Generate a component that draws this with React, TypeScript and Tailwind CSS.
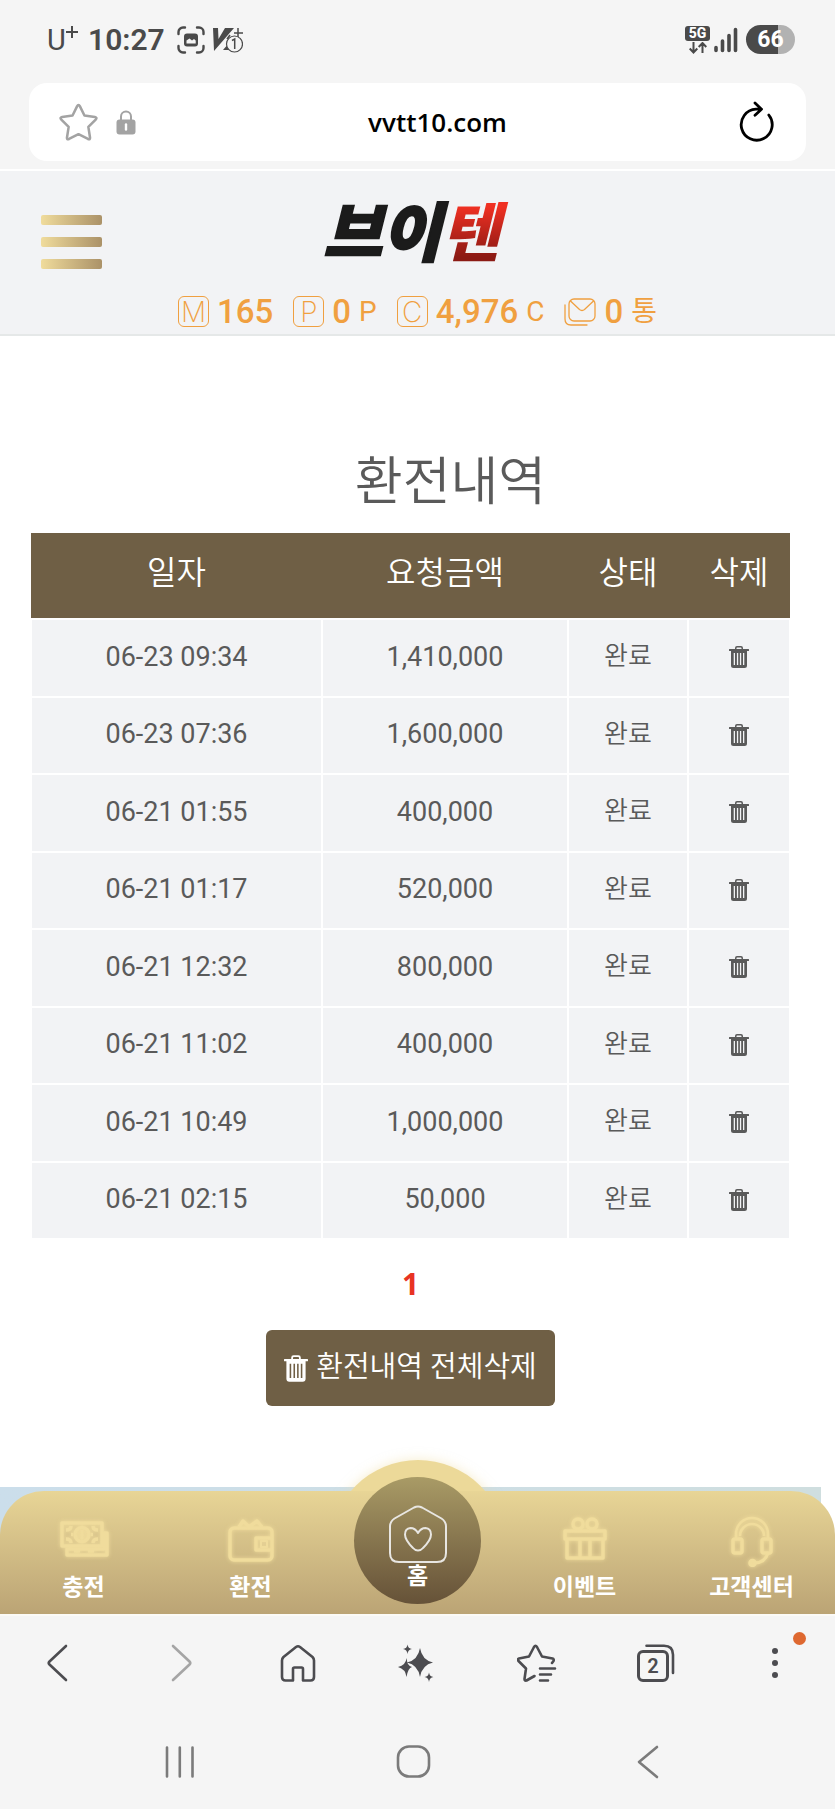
import type { ReactNode } from "react";

const HISTORY = [
  { date: "06-23 09:34", amount: "1,410,000", status: "완료" },
  { date: "06-23 07:36", amount: "1,600,000", status: "완료" },
  { date: "06-21 01:55", amount: "400,000", status: "완료" },
  { date: "06-21 01:17", amount: "520,000", status: "완료" },
  { date: "06-21 12:32", amount: "800,000", status: "완료" },
  { date: "06-21 11:02", amount: "400,000", status: "완료" },
  { date: "06-21 10:49", amount: "1,000,000", status: "완료" },
  { date: "06-21 02:15", amount: "50,000", status: "완료" },
];

function TrashIcon({ className }: { className: string }) {
  return (
    <svg viewBox="0 0 20 22" className={className} fill="currentColor" aria-hidden="true">
      <path
        fillRule="evenodd"
        d="M6 3V2a2 2 0 0 1 2-2h4a2 2 0 0 1 2 2v1h5.500a.5.5 0 0 1 .5.5v1a.5.5 0 0 1-.5.5H18v14.500a2.500 2.500 0 0 1-2.500 2.500h-11A2.500 2.500 0 0 1 2 19.500V5H.5a.5.5 0 0 1-.5-.5v-1A.5.5 0 0 1 .5 3ZM7.500 3h5v-.8a.7.7 0 0 0-.7-.7H8.200a.7.7 0 0 0-.7.7ZM4.700 7v12h1.300V7ZM7.900 7v12h1.300V7ZM10.900 7v12h1.300V7ZM14 7v12h1.300V7Z"
      />
    </svg>
  );
}

function StatusBar() {
  return (
    <div className="flex h-[83px] items-center justify-between pb-1 pl-[47px] pr-10 text-[#4a4a4a]">
      <div className="flex items-center">
        <span className="flex w-[41px] items-center text-[29px] leading-8">
          U
          <svg viewBox="0 0 12 12" className="mb-4 h-3 w-3" stroke="currentColor" strokeWidth="2" aria-hidden="true">
            <path d="M6 0v12M0 6h12" />
          </svg>
        </span>
        <span className="text-[30px] font-semibold leading-8">10:27</span>
        <svg viewBox="0 0 28 28" className="ml-3 h-7 w-7" fill="none" stroke="currentColor" strokeWidth="2.400" strokeLinecap="round" aria-hidden="true">
          <path d="M1.500 8V6A4.500 4.500 0 0 1 6 1.500h2M20 1.500h2A4.500 4.500 0 0 1 26.500 6v2M26.500 20v2a4.500 4.500 0 0 1-4.500 4.500h-2M8 26.500H6A4.500 4.500 0 0 1 1.500 22v-2" />
          <rect x="7" y="7.500" width="14" height="13" rx="3" fill="currentColor" stroke="none" />
          <path d="M9.500 17.500v-3l3-2 2.500 2 2-1.500 1.700 1.500v3z" fill="#f5f5f5" stroke="none" />
        </svg>
        <svg viewBox="0 0 32 28" className="ml-[6px] h-7 w-8" aria-hidden="true">
          <path d="M2 2h5l.5 11L14 2h9L3 25ZM12 24l6-7v7Z" fill="currentColor" />
          <path d="M27 2v9M23 7h9M16 13l3-4" stroke="currentColor" strokeWidth="1.500" />
          <circle cx="23.500" cy="18" r="8" fill="#f5f5f5" stroke="currentColor" strokeWidth="1.200" />
          <path d="M21 14.500l2.700-1.500v10" fill="none" stroke="currentColor" strokeWidth="1.500" />
        </svg>
      </div>
      <div className="flex items-center">
        <div className="flex w-[25px] flex-col items-center">
          <span className="flex h-[15px] w-full items-center justify-center rounded-[3px] bg-[#4a4a4a] text-[14px] font-extrabold leading-none text-white">
            5G
          </span>
          <svg viewBox="0 0 18 12" className="mt-px h-3 w-[18px]" fill="none" stroke="currentColor" strokeWidth="2" aria-hidden="true">
            <path d="M4.500 0v10M.7 6.500l3.800 4 3.800-4M13.500 11V1M9.700 5l3.800-4 3.800 4" />
          </svg>
        </div>
        <svg viewBox="0 0 24 26" className="ml-1 h-[26px] w-6" stroke="currentColor" strokeWidth="3.600" strokeLinecap="round" aria-hidden="true">
          <path d="M2 20.500v3M8.500 14v9.500M15 8.500v15M21.500 2.500v21" />
        </svg>
        <span className="ml-2 flex h-[29px] w-[49px] items-center justify-center rounded-full bg-[linear-gradient(90deg,#4a4a4a_65%,#b2b2b2_65%)] text-[23px] font-bold leading-none text-white">
          66
        </span>
      </div>
    </div>
  );
}

function AddressBar() {
  return (
    <div className="mx-[29px] mb-2 flex h-[78px] items-center rounded-[18px] bg-white px-[30px]">
      <div className="flex flex-1 items-center gap-[18px]">
        <button type="button" aria-label="북마크">
          <svg viewBox="0 0 40 40" className="h-[39px] w-[39px]" fill="none" stroke="#a3a3a3" strokeWidth="2.600" strokeLinejoin="round">
            <path d="M18.500 3.500q1.500-3 3 0l4.600 9.300 10.700 1.600q2.700.5.800 2.600l-7.500 7.500 1.700 10.900q.3 2.600-2.100 1.500L20 32l-9.700 4.900q-2.400 1.100-2.100-1.500l1.700-10.900-7.500-7.500q-1.900-2.100.8-2.600l10.700-1.600z" />
          </svg>
        </button>
        <svg viewBox="0 0 20 26" className="h-[26px] w-5" aria-hidden="true">
          <path d="M5 12V7.500a5 5 0 0 1 10 0V12" fill="none" stroke="#a3a3a3" strokeWidth="2" />
          <rect x=".5" y="10.500" width="19" height="15" rx="3" fill="#a3a3a3" />
          <path d="M10 15.500v5" stroke="#fff" strokeWidth="2.400" strokeLinecap="round" />
        </svg>
      </div>
      <span className="pl-10 font-['Open_Sans',sans-serif] text-[26px] font-semibold text-black">vvtt10.com</span>
      <div className="flex flex-1 justify-end">
        <button type="button" aria-label="새로고침">
          <svg viewBox="0 0 40 42" className="h-[42px] w-10" fill="none" stroke="#000" strokeWidth="2.800" strokeLinecap="round" strokeLinejoin="round">
            <path d="M32.800 14A15.500 15.500 0 1 1 20 8.200h5.500M19 2l6.500 6.200-6.500 6" />
          </svg>
        </button>
      </div>
    </div>
  );
}

function LetterBox({ children }: { children: string }) {
  return (
    <span className="flex h-[31px] w-[31px] items-center justify-center rounded-[6px] border border-[#f0a040] font-[Inter] text-[28px] font-extralight leading-none">
      {children}
    </span>
  );
}

function Balance({ icon, value, unit }: { icon: ReactNode; value: string; unit?: string }) {
  return (
    <li className="flex items-center gap-2">
      {icon}
      <span className="text-[33px] font-medium leading-8">{value}</span>
      {unit && <span className="text-[28px] leading-8">{unit}</span>}
    </li>
  );
}

function SiteHeader() {
  return (
    <header className="border-b-2 border-t-2 border-b-[#e5e8e8] border-t-white bg-[#f2f3f5] pb-[7px]">
      <div className="grid h-[125px] grid-cols-[1fr_auto_1fr] items-center px-[41px]">
        <button type="button" aria-label="메뉴" className="mt-4 flex w-[61px] flex-col gap-3">
          <span className="h-[10px] w-full rounded-[2px] bg-linear-to-r from-[#f0dc9c] to-[#ab9268]" />
          <span className="h-[10px] w-full rounded-[2px] bg-linear-to-r from-[#f0dc9c] to-[#ab9268]" />
          <span className="h-[10px] w-full rounded-[2px] bg-linear-to-r from-[#f0dc9c] to-[#ab9268]" />
        </button>
        <a href="#" className="mb-3 flex pr-3 font-['Noto_Sans_CJK_KR',sans-serif] text-[64px] font-black italic leading-[72px]">
          <span className="text-[#1b1b1b] [-webkit-text-stroke:2px]">브이</span>
          <span className="-mr-3 bg-linear-to-b from-[#f03022] from-20% to-[#8c1a14] to-90% bg-clip-text pr-3 text-transparent">텐</span>
        </a>
      </div>
      <ul className="flex h-[31px] items-center justify-center gap-5 text-[#f0a040]">
        <Balance icon={<LetterBox>M</LetterBox>} value="165" />
        <Balance icon={<LetterBox>P</LetterBox>} value="0" unit="P" />
        <Balance icon={<LetterBox>C</LetterBox>} value="4,976" unit="C" />
        <Balance
          icon={
            <svg viewBox="0 0 32 28" className="h-7 w-8" fill="none" stroke="currentColor" strokeWidth="1.300" strokeLinecap="round" aria-hidden="true">
              <rect x="5" y="1" width="26" height="22" rx="5" />
              <path d="M6.500 3l9 8.500q2.500 2 5 0l9-8.500M1 7v14q0 6 6 6h16" />
            </svg>
          }
          value="0"
          unit="통"
        />
      </ul>
    </header>
  );
}

function HistoryTable() {
  return (
    <table className="h-[707px] w-full table-fixed border-collapse text-center text-[#5a5a5a]">
      <thead>
        <tr className="h-[86px] bg-[#6f5f45] text-[32px] text-white">
          <th className="w-[291px] pb-[6px] font-[350]">일자</th>
          <th className="pb-[6px] font-[350]">요청금액</th>
          <th className="w-[120px] pb-[6px] font-[350]">상태</th>
          <th className="w-[102px] pb-[6px] font-[350]">삭제</th>
        </tr>
      </thead>
      <tbody className="text-[27px]">
        {HISTORY.map((row) => (
          <tr key={row.date} className="bg-[#f2f3f5]">
            <td className="border-2 border-white pb-[2px]">{row.date}</td>
            <td className="border-2 border-white pb-[2px]">{row.amount}</td>
            <td className="border-2 border-white pb-[2px] text-[26px] font-[350]">{row.status}</td>
            <td className="border-2 border-white pb-1">
              <button type="button" aria-label="삭제" className="align-middle">
                <TrashIcon className="h-[22px] w-5" />
              </button>
            </td>
          </tr>
        ))}
      </tbody>
    </table>
  );
}

function NavItem({ label, children }: { label: string; children: ReactNode }) {
  return (
    <a href="#" className="flex flex-col items-center pt-[22px]">
      <svg
        viewBox="0 0 52 54"
        className="h-[54px] w-[52px] drop-shadow-[0_0_2px_#f0dc9c]"
        fill="none"
        stroke="#f0dc9c"
        strokeWidth="3.500"
        strokeLinejoin="round"
        aria-hidden="true"
      >
        {children}
      </svg>
      <span className="mt-[7px]">{label}</span>
    </a>
  );
}

function BottomNav() {
  return (
    <div className="relative pt-1">
      {/* page footer peeking out behind the rounded corners */}
      <div className="absolute bottom-0 left-0 right-[14px] top-0 bg-linear-to-r from-[#cbdeeb] to-[#cfdedf]" />
      <div className="absolute -top-[47px] bottom-0 left-0 right-0 flex justify-center overflow-hidden pt-5">
        <div className="h-[176px] w-[176px] shrink-0 rounded-full bg-[#ecd999] shadow-[0_0_12px_#f0dc9c80]" />
      </div>
      <nav className="relative grid h-[123px] grid-cols-5 rounded-t-[44px] bg-linear-to-b from-[#e8d596] to-[#bba475] text-[23px] font-bold leading-7 text-white">
        <NavItem label="충전">
          <path d="M4 10h40v23H4z" />
          <path d="M46 20h3v22H9v-6h37z" />
          <circle cx="24" cy="21.500" r="7" fill="#f0dc9c" fillOpacity=".5" />
          <path d="M8 17q5 0 5-4M8 26q5 0 5 4M40 17q-5 0-5-4M40 26q-5 0-5 4M24 17v9M13 21.500h2M33 21.500h2M16 38h6M30 38h6" />
        </NavItem>
        <NavItem label="환전">
          <rect x="5" y="15" width="42" height="32" rx="4" />
          <path d="M14 14l4-6 6 6 8-6 5 6M47 25H31v12h16" />
          <path d="M36 28v6h6v-6z" strokeWidth="2" />
        </NavItem>
        <a href="#" className="flex justify-center">
          <span className="-mt-[14px] flex h-[127px] w-[127px] flex-col items-center rounded-full bg-linear-to-b from-[#a99b66] to-[#665238] pt-7">
            <svg viewBox="0 0 58 58" className="h-[58px] w-[58px] shrink-0" fill="none" stroke="#e8e6e2" strokeWidth="2" strokeLinejoin="round" aria-hidden="true">
              <path d="M25 2.500q4-2 8 0l19.500 11q4.500 3 4.500 8V48q0 9-9 9H10q-9 0-9-9V21.500q0-5 4.500-8z" />
              <path d="M29 45.500q-3 0-5-2.500-8-8-8-13.500 0-6 5.500-6.500 4.500 0 7.500 5 3-5 7.500-5Q42 23.500 42 29.500q0 5.500-8 13.500-2 2.500-5 2.500z" />
            </svg>
            <span>홈</span>
          </span>
        </a>
        <NavItem label="이벤트">
          <path d="M6 18h40v8H6zM8 26h36v19H8zM21 26v19M31 26v19" />
          <circle cx="19" cy="11" r="5" />
          <circle cx="33" cy="11" r="5" />
        </NavItem>
        <NavItem label="고객센터">
          <path d="M10 25V21a16 16 0 0 1 32 0v4M14 23a12 12 0 0 1 24 0" strokeWidth="2.600" />
          <rect x="7" y="26" width="9" height="14" rx="2" />
          <rect x="36" y="26" width="9" height="14" rx="2" />
          <path d="M42 40q-3 10-14 10" strokeWidth="3" />
          <circle cx="26.500" cy="50" r="2.500" fill="#f0dc9c" />
        </NavItem>
      </nav>
    </div>
  );
}

function ToolButton({ label, children }: { label: string; children: ReactNode }) {
  return (
    <button type="button" aria-label={label} className="flex items-center justify-center">
      <svg viewBox="0 0 40 40" className="h-10 w-10" fill="none" stroke="currentColor" strokeWidth="2.600" strokeLinecap="round" strokeLinejoin="round">
        {children}
      </svg>
    </button>
  );
}

function BrowserToolbar() {
  return (
    <div className="grid h-[97px] grid-cols-7 border-t-2 border-[#fbfaf6] pb-[2px] text-[#4c4c50]">
      <ToolButton label="뒤로">
        <path d="M26 3L9.500 18.500q-1.500 1.500 0 3L26 37" />
      </ToolButton>
      <button type="button" aria-label="앞으로" className="flex items-center justify-center">
        <svg viewBox="0 0 40 40" className="h-10 w-10" fill="none" stroke="#a5a5a5" strokeWidth="2.600" strokeLinecap="round" strokeLinejoin="round">
          <path d="M14 3L30.500 18.500q1.500 1.500 0 3L14 37" />
        </svg>
      </button>
      <ToolButton label="홈">
        <path d="M18 4q2-1.500 4 0l12.500 10q1.500 1.500 1.500 3.500V34q0 3.500-3.500 3.500H25V26q0-1.500-1.500-1.500h-7Q15 24.500 15 26v11.500H7.500Q4 37.500 4 34V17.500Q4 15.500 5.500 14z" />
      </ToolButton>
      <ToolButton label="AI">
        <path
          d="M23 5q2 12 13 14.500Q25 22 23 34q-2-12-13-14.500Q21 17 23 5ZM9.500 15q.5 4 1.500 6 1.500 2.500 4 3-4 1-5.500 10-1-8-8.500-10 8-2 8.500-9ZM10.500 1.500q.5 4 4.500 4.500-4 .5-4.500 5Q10 6.500 6 6q4-.5 4.500-4.500ZM32 29.500q.5 4 4.500 4.500-4 .5-4.500 5-.5-4.500-4.500-5 4-.5 4.500-4.500Z"
          fill="currentColor"
          stroke="none"
        />
      </ToolButton>
      <ToolButton label="북마크 목록">
        <path d="M35 20l1.500-2q.8-2-1-2.500L25 13.500 20 4q-1.500-2.500-3 0l-5 9.500-10 2q-2 .7-.5 2.500L9 25.500 7.500 36q0 2 2 1.500l8-4.500M23 25.500h15M23 31.500h11M23 37.500h8" />
      </ToolButton>
      <button type="button" aria-label="탭" className="flex items-center justify-center">
        <span className="relative flex h-[38px] w-[38px] items-end">
          <span className="flex h-8 w-8 items-center justify-center rounded-[6px] border-[3px] border-current text-[20px] font-semibold leading-none">2</span>
          <svg viewBox="0 0 38 38" className="absolute inset-0" fill="none" stroke="currentColor" strokeWidth="2.600" strokeLinecap="round" aria-hidden="true">
            <path d="M9.500 1.700H27q9 0 9 9V29" />
          </svg>
        </span>
      </button>
      <button type="button" aria-label="더보기" className="flex items-center justify-center">
        <span className="relative flex flex-col gap-[6px]">
          <span className="h-[6px] w-[6px] rounded-full bg-current" />
          <span className="h-[6px] w-[6px] rounded-full bg-current" />
          <span className="h-[6px] w-[6px] rounded-full bg-current" />
          <span className="absolute -right-7 -top-4 h-[13px] w-[13px] rounded-full bg-[#de6830]" />
        </span>
      </button>
    </div>
  );
}

function SystemNav() {
  return (
    <div className="grid h-[98px] grid-cols-3 pl-[63px] pr-[69px] pt-1 text-[#7b7b7b]">
      <ToolButton label="최근 앱">
        <path d="M7 5.500v29M19.800 5.500v29M32.500 5.500v29" />
      </ToolButton>
      <ToolButton label="홈 화면">
        <rect x="4" y="4.500" width="31" height="30" rx="11" />
      </ToolButton>
      <ToolButton label="이전">
        <path d="M28 5L10 20l18 15" />
      </ToolButton>
    </div>
  );
}

export default function App() {
  return (
    <div className="flex min-h-screen flex-col bg-[#f5f5f5] font-[Roboto,'Noto_Sans_CJK_KR',sans-serif]">
      <StatusBar />
      <AddressBar />
      <SiteHeader />
      <div className="bg-white">
        <main className="mr-[14px] flex flex-col items-center px-[30px] pb-[81px] pt-[117px]">
          <h1 className="mb-5 pl-20 text-[52px] font-[350] leading-[60px] text-[#5a5a5a]">환전내역</h1>
          <HistoryTable />
          <a href="#" className="mt-7 font-['Open_Sans',sans-serif] text-[30px] font-bold leading-8 text-[#e83323]">
            1
          </a>
          <button type="button" className="mt-[30px] flex h-[76px] items-center gap-2 rounded-[6px] bg-[#6f5f45] px-[18px] text-[29px] font-[350] text-white">
            <TrashIcon className="h-[27px] w-6" />
            환전내역 전체삭제
          </button>
        </main>
        <BottomNav />
      </div>
      <BrowserToolbar />
      <SystemNav />
    </div>
  );
}
